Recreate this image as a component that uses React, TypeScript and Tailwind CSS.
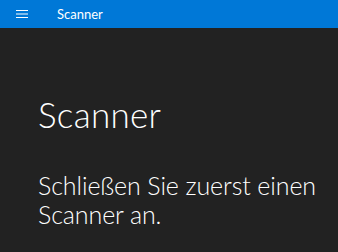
import React from 'react';

const App: React.FC = () => {
  return (
    <div className="w-[338px] h-[252px] flex flex-col bg-[#222222] overflow-hidden" style={{ fontFamily: 'Lato, "Noto Sans", sans-serif' }}>
      <div className="h-[28px] shrink-0 bg-[#0078d7] flex items-center text-white">
        <div className="w-[44px] flex justify-center">
          <svg width="12" height="8" viewBox="0 0 12 8">
            <rect x="0" y="0" width="12" height="1" fill="#fff" />
            <rect x="0" y="3.5" width="12" height="1" fill="#fff" />
            <rect x="0" y="7" width="12" height="1" fill="#fff" />
          </svg>
        </div>
        <span className="ml-[13px] text-[13px] leading-none">Scanner</span>
      </div>

      <div className="flex-1 pl-[38px] pt-[69px] text-white">
        <h1 className="text-[35px] font-light leading-none tracking-[0.3px]">Scanner</h1>
        <p className="mt-[39px] text-[25px] font-light leading-[29px] tracking-[-0.1px]">
          Schließen Sie zuerst einen Scanner an.
        </p>
      </div>
    </div>
  );
};

export default App;
